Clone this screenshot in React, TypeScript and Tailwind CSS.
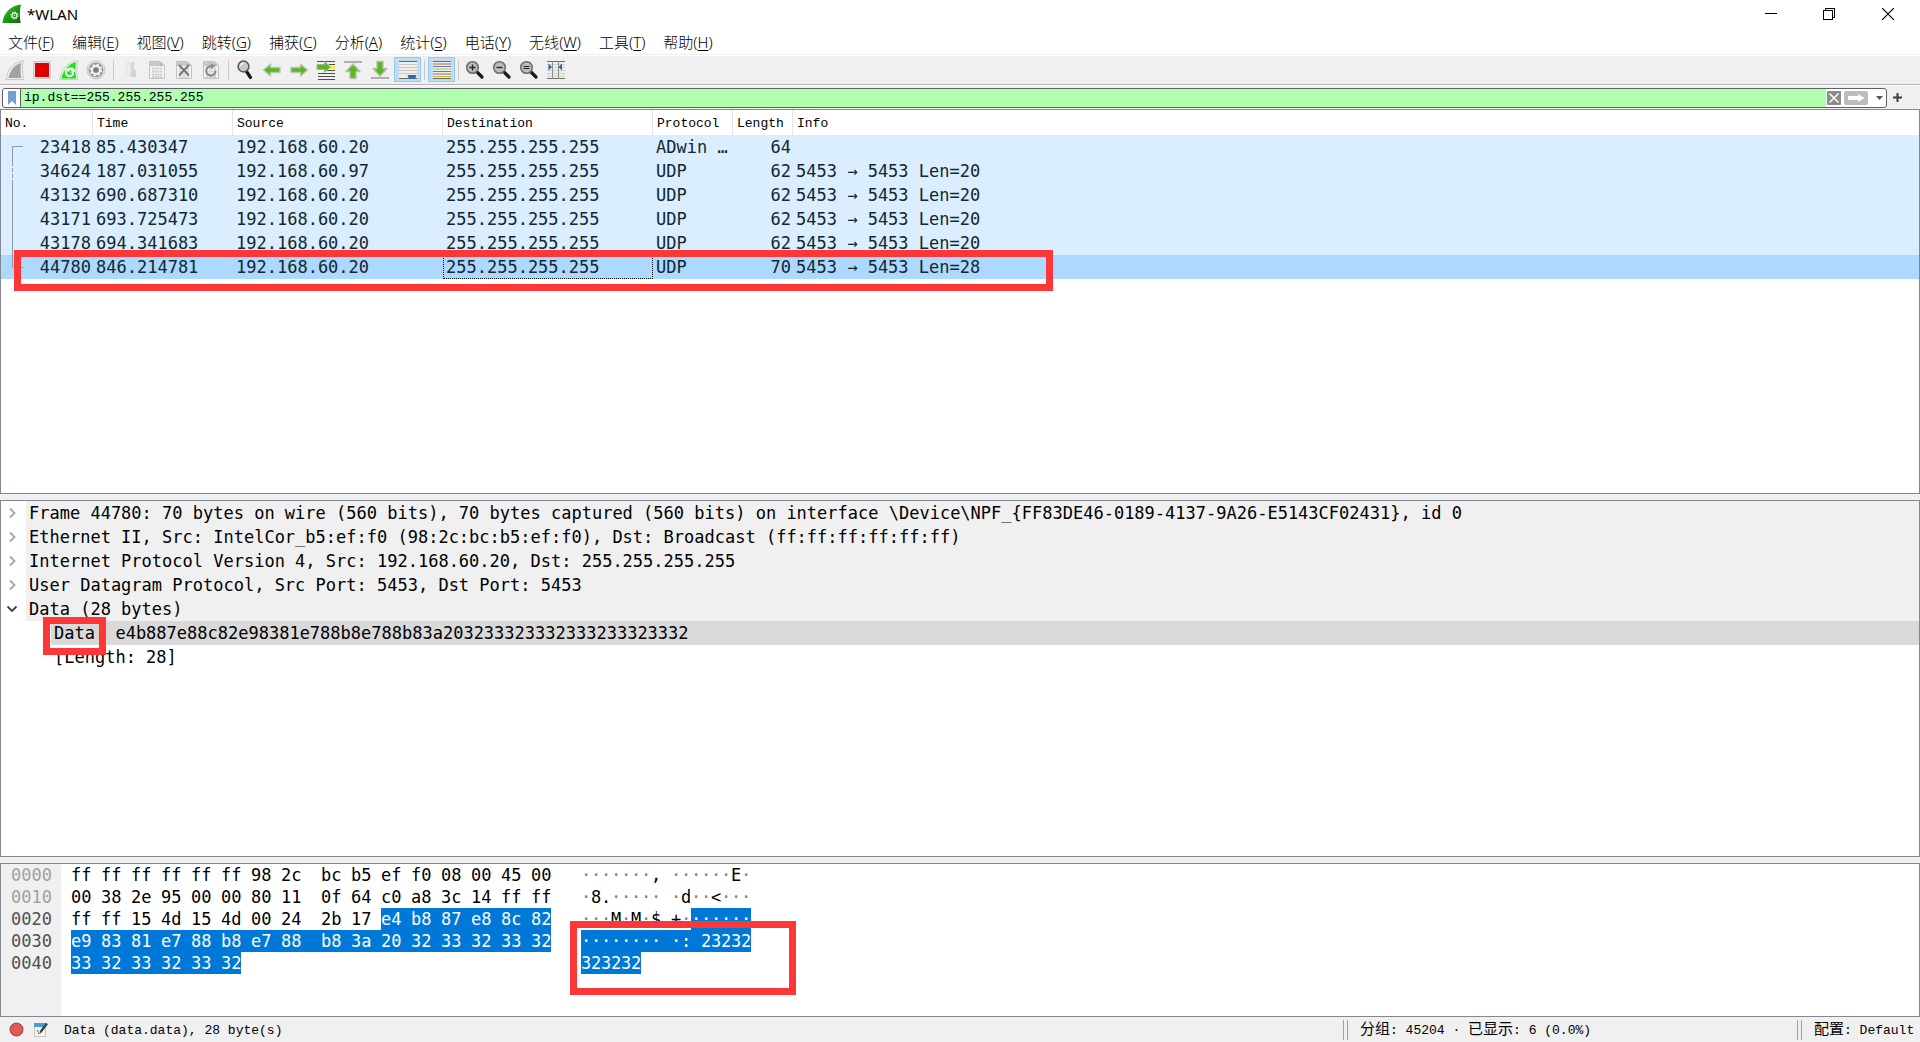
import React from "react";

const MONO = "font-['Liberation_Mono','Noto_Sans_CJK_SC',monospace]";
const PACKET = "font-['DejaVu_Sans_Mono','Liberation_Mono',monospace]";

const menus: [string, string][] = [
  ["文件", "F"],
  ["编辑", "E"],
  ["视图", "V"],
  ["跳转", "G"],
  ["捕获", "C"],
  ["分析", "A"],
  ["统计", "S"],
  ["电话", "Y"],
  ["无线", "W"],
  ["工具", "T"],
  ["帮助", "H"],
];

const packets = [
  ["23418", "85.430347", "192.168.60.20", "255.255.255.255", "ADwin …", "64", ""],
  ["34624", "187.031055", "192.168.60.97", "255.255.255.255", "UDP", "62", "5453 → 5453 Len=20"],
  ["43132", "690.687310", "192.168.60.20", "255.255.255.255", "UDP", "62", "5453 → 5453 Len=20"],
  ["43171", "693.725473", "192.168.60.20", "255.255.255.255", "UDP", "62", "5453 → 5453 Len=20"],
  ["43178", "694.341683", "192.168.60.20", "255.255.255.255", "UDP", "62", "5453 → 5453 Len=20"],
  ["44780", "846.214781", "192.168.60.20", "255.255.255.255", "UDP", "70", "5453 → 5453 Len=28"],
];

const details = [
  { open: false, text: "Frame 44780: 70 bytes on wire (560 bits), 70 bytes captured (560 bits) on interface \\Device\\NPF_{FF83DE46-0189-4137-9A26-E5143CF02431}, id 0" },
  { open: false, text: "Ethernet II, Src: IntelCor_b5:ef:f0 (98:2c:bc:b5:ef:f0), Dst: Broadcast (ff:ff:ff:ff:ff:ff)" },
  { open: false, text: "Internet Protocol Version 4, Src: 192.168.60.20, Dst: 255.255.255.255" },
  { open: false, text: "User Datagram Protocol, Src Port: 5453, Dst Port: 5453" },
  { open: true, text: "Data (28 bytes)" },
];

const SELECTED_FROM = 42;
const dump = [
  { offset: "0000", dim: true, hex: "ff ff ff ff ff ff 98 2c bc b5 ef f0 08 00 45 00", ascii: "·······,······E·" },
  { offset: "0010", dim: true, hex: "00 38 2e 95 00 00 80 11 0f 64 c0 a8 3c 14 ff ff", ascii: "·8.······d··<···" },
  { offset: "0020", dim: false, hex: "ff ff 15 4d 15 4d 00 24 2b 17 e4 b8 87 e8 8c 82", ascii: "···M·M·$+·······" },
  { offset: "0030", dim: false, hex: "e9 83 81 e7 88 b8 e7 88 b8 3a 20 32 33 32 33 32", ascii: "·········: 23232" },
  { offset: "0040", dim: false, hex: "33 32 33 32 33 32", ascii: "323232" },
];

function FinGrey() {
  return (
    <svg width="20" height="20" viewBox="0 0 20 20">
      <path d="M1 19.500C2 10 8 2 18.500.8c-1.800 5.500-1.600 12 .5 18.700z" fill="#efefef" stroke="#c9c9c9" />
      <path d="M3.500 18C5 10.500 9.500 4.600 16.200 2.700c-1 5-1 10 .3 15.300z" fill="#a2a2a2" />
    </svg>
  );
}

function Stop() {
  return (
    <svg width="20" height="20" viewBox="0 0 20 20">
      <rect x="1.500" y="1.500" width="17" height="17" fill="#e2e2e2" stroke="#c8c8c8" />
      <rect x="3" y="3" width="14" height="14" fill="#dd0000" />
    </svg>
  );
}

function FinGreen() {
  return (
    <svg width="20" height="20" viewBox="0 0 20 20">
      <path d="M1 19.500C2 10 8 2 19 .8c-1.800 5.500-1.600 12 0 18.700z" fill="#eaf6e7" stroke="#c3cfc0" />
      <path d="M2.500 18.500C4 10.500 9.500 3.600 17 2.200c-1 5-1 11 .3 16.300z" fill="#23e01c" />
      <path d="M7.500 10.500a3.600 3.600 0 0 0 2 5.500 3.800 3.800 0 0 0 4.800-3" fill="none" stroke="#fff" strokeWidth="1.900" />
      <path d="M5.500 9.500 10 7.500l.5 4.500z M10.500 7.500l3.500.2a4 4 0 0 1 2 4l-2 1.300-3-.5 1.800-.8a2 2 0 0 0-2.300-1.700z" fill="#fff" />
    </svg>
  );
}

function Gear() {
  return (
    <svg width="20" height="20" viewBox="0 0 20 20">
      <circle cx="10" cy="10" r="9" fill="#ececec" stroke="#c4c4c4" />
      <circle cx="10" cy="10" r="7.500" fill="#969696" />
      <circle cx="10" cy="10" r="4" fill="none" stroke="#f6f6f6" strokeWidth="2" />
      <circle cx="10" cy="10" r="5.600" fill="none" stroke="#f6f6f6" strokeWidth="1.400" strokeDasharray="2.200 2.200" />
      <circle cx="10" cy="10" r="2.400" fill="#808080" />
    </svg>
  );
}

function OpenFile() {
  return (
    <svg width="20" height="20" viewBox="0 0 20 20">
      <path d="M5 2h9v8h2v7h-6l-4-2z" fill="#e3e3e3" />
      <path d="M12 2h2v8h2v7h-5z" fill="#d4d4d4" />
      <path d="M5 2l5 1.500V18l-5-2z" fill="#ebebeb" />
    </svg>
  );
}

function Sheet({ children }: { children?: React.ReactNode }) {
  return (
    <svg width="20" height="20" viewBox="0 0 20 20">
      <path d="M2.500 1.500h11l4 4v13h-15z" fill="#f3f3f3" stroke="#c2c2c2" />
      <path d="M3 2h10v4H3z" fill="#c9c9c9" />
      <path d="M13 2v4h4z" fill="#b2b2b2" />
      <path d="M5 8.500h10M5 11.500h10M5 14.500h10M5 17h10" stroke="#cfcfcf" strokeWidth="1.800" strokeDasharray="2 .7" />
      {children}
    </svg>
  );
}

function Glass({ mark }: { mark: string }) {
  return (
    <svg width="20" height="20" viewBox="0 0 20 20">
      <path d="M11.500 11.500l5.500 5.500" stroke="#1a1a1a" strokeWidth="3.200" strokeLinecap="round" />
      <circle cx="7.500" cy="7.500" r="5.800" fill="#bdbdbd" stroke="#6a6a6a" strokeWidth="1.500" />
      {mark === "+" && <path d="M4.500 7.500h6M7.500 4.500v6" stroke="#222" strokeWidth="1.300" />}
      {mark === "-" && <path d="M4.500 7.500h6" stroke="#222" strokeWidth="1.300" />}
      {mark === "=" && <path d="M4.500 6.500h6M4.500 8.500h6" stroke="#222" strokeWidth="1.200" />}
    </svg>
  );
}

function Find() {
  return (
    <svg width="20" height="20" viewBox="0 0 20 20">
      <path d="M11.500 11.500l4 6" stroke="#1a1a1a" strokeWidth="3.200" strokeLinecap="round" />
      <circle cx="8.500" cy="6.500" r="5.400" fill="#c8c8c8" stroke="#555" strokeWidth="1.500" />
      <path d="M5.500 6a3 3 0 0 1 3-2.500" fill="none" stroke="#fff" strokeWidth="1.200" />
    </svg>
  );
}

function Back() {
  return (
    <svg width="20" height="20" viewBox="0 0 20 20">
      <path d="M1.500 10 8.500 4v3.500H18v5H8.500V16z" fill="#58b81c" stroke="#b9c4b2" strokeWidth="1.400" strokeLinejoin="round" />
    </svg>
  );
}

function Forward() {
  return (
    <svg width="20" height="20" viewBox="0 0 20 20">
      <path d="M18.500 10 11.500 4v3.500H2v5h9.500V16z" fill="#58b81c" stroke="#b9c4b2" strokeWidth="1.400" strokeLinejoin="round" />
    </svg>
  );
}

function GoTo() {
  return (
    <svg width="20" height="20" viewBox="0 0 20 20">
      <path d="M1 1.500h18M2 13.500h17M2 16.500h17M2 19.500h17M13 4.500h6M11 10.500h8" stroke="#4a4f50" strokeWidth="1" />
      <path d="M14 7.500h5" stroke="#fce94f" strokeWidth="3" />
      <path d="M14.500 7 8.500 1.500v3H1v5h7.500v3z" fill="#58b81c" stroke="#a5b59a" strokeLinejoin="round" />
    </svg>
  );
}

function Top() {
  return (
    <svg width="20" height="20" viewBox="0 0 20 20">
      <path d="M1 2h18" stroke="#b0b0b0" strokeWidth="2" />
      <path d="M10 4 3 11.500h4v7h6v-7h4z" fill="#58b81c" stroke="#b4c0ac" strokeWidth="1.400" strokeLinejoin="round" />
    </svg>
  );
}

function Bottom() {
  return (
    <svg width="20" height="20" viewBox="0 0 20 20">
      <path d="M1 18h18" stroke="#b0b0b0" strokeWidth="2" />
      <path d="M10 16 3 8.500h4v-7h6v7h4z" fill="#58b81c" stroke="#b4c0ac" strokeWidth="1.400" strokeLinejoin="round" />
    </svg>
  );
}

function AutoScroll() {
  return (
    <svg width="20" height="20" viewBox="0 0 20 20">
      <path d="M1 1h18v18H1z" fill="#eeeeec" />
      <path d="M1 1.500h18M1 18.500h18" stroke="#666864" />
      <path d="M1 4.500h18M1 7.500h18M1 10.500h18M1 13.500h18" stroke="#c8c9c5" />
      <path d="M9.500 15h9l-1.500 4h-6z" fill="#3465a4" />
    </svg>
  );
}

function Colorize() {
  return (
    <svg width="20" height="20" viewBox="0 0 20 20">
      <path d="M1 1h18v18H1z" fill="#eeeeec" />
      <path d="M1 1.500h18M1 18.500h18" stroke="#666864" />
      <path d="M1 4h18" stroke="#f04848" />
      <path d="M1 6.500h18" stroke="#5580b8" />
      <path d="M1 9h18" stroke="#86d838" />
      <path d="M1 11.500h18" stroke="#5580b8" />
      <path d="M1 14h18" stroke="#8d6c93" />
      <path d="M1 16.500h18" stroke="#d0b020" />
    </svg>
  );
}

function ResizeColumns() {
  return (
    <svg width="20" height="20" viewBox="0 0 20 20">
      <path d="M1 1h18v18H1z" fill="#eeeeec" />
      <path d="M1 4.500h18M1 7.500h18M1 10.500h18M1 13.500h18M1 16h18" stroke="#cfd0cc" />
      <path d="M1 1.500h18M1 18.500h18" stroke="#666864" />
      <path d="M6.500 1v18M12.500 1v18" stroke="#8d8f8b" />
      <path d="M2.500 3.500 6 7l-3.500 3.500zM16 3.500 12.500 7l3.500 3.500z" fill="#2d62b0" />
    </svg>
  );
}

type Tool = { label: string; icon: React.ReactNode; on?: boolean } | null;

const tools: Tool[] = [
  { label: "开始捕获", icon: <FinGrey /> },
  { label: "停止捕获", icon: <Stop /> },
  { label: "重新开始捕获", icon: <FinGreen /> },
  { label: "捕获选项", icon: <Gear /> },
  null,
  { label: "打开", icon: <OpenFile /> },
  { label: "保存", icon: <Sheet /> },
  {
    label: "关闭",
    icon: (
      <Sheet>
        <path d="M5 5l10 10.500M15 5L5 15.500" stroke="#777" strokeWidth="1.900" />
      </Sheet>
    ),
  },
  {
    label: "重新加载",
    icon: (
      <Sheet>
        <path d="M14.500 10.500a4.700 4.700 0 1 1-3-4" fill="none" stroke="#8a8a8a" strokeWidth="2" />
        <path d="M9.500 3.500l5 2.500-4.500 3z" fill="#8a8a8a" />
      </Sheet>
    ),
  },
  null,
  { label: "查找", icon: <Find /> },
  { label: "后退", icon: <Back /> },
  { label: "前进", icon: <Forward /> },
  { label: "转到分组", icon: <GoTo /> },
  { label: "首个分组", icon: <Top /> },
  { label: "最新分组", icon: <Bottom /> },
  { label: "自动滚动", icon: <AutoScroll />, on: true },
  null,
  { label: "着色", icon: <Colorize />, on: true },
  null,
  { label: "放大", icon: <Glass mark="+" /> },
  { label: "缩小", icon: <Glass mark="-" /> },
  { label: "正常大小", icon: <Glass mark="=" /> },
  { label: "调整列宽", icon: <ResizeColumns /> },
];

function TitleBar() {
  return (
    <header className="flex h-7 shrink-0 items-center bg-white pl-0.5">
      <svg width="20" height="20" viewBox="0 0 20 20">
        <defs>
          <linearGradient id="fin" x1="0" y1="0" x2="1" y2="1">
            <stop offset="0" stopColor="#5fc34a" />
            <stop offset=".5" stopColor="#1f9a12" />
            <stop offset="1" stopColor="#0c6a08" />
          </linearGradient>
        </defs>
        <path d="M.5 19C1 10 8 1.500 19 .5c-1.500 6-1.500 12-.3 18.500z" fill="url(#fin)" />
        <circle cx="12.500" cy="11.500" r="2.500" fill="none" stroke="#dff3da" strokeWidth="1.300" />
        <circle cx="12.500" cy="11.500" r="3.600" fill="none" stroke="#dff3da" strokeDasharray="1.300 1.500" />
        <circle cx="12.500" cy="11.500" r=".8" fill="#dff3da" />
      </svg>
      <h1 className="ml-[5px] flex-1 text-[15px] leading-5">*WLAN</h1>
      <div className="flex self-stretch pr-0.5">
        <button aria-label="最小化" className="flex w-[58px] items-center justify-center">
          <svg width="12" height="12" viewBox="0 0 12 12"><path d="M0 5.500h12" stroke="#000" /></svg>
        </button>
        <button aria-label="还原" className="flex w-[58px] items-center justify-center">
          <svg width="12" height="12" viewBox="0 0 12 12" shapeRendering="crispEdges">
            <path d="M.5 2.500h9v9h-9zM2.500 2.500v-2h9v9h-2" fill="none" stroke="#000" />
          </svg>
        </button>
        <button aria-label="关闭窗口" className="flex w-[60px] items-center justify-center">
          <svg width="12" height="12" viewBox="0 0 12 12"><path d="M0 0l12 12M12 0L0 12" stroke="#000" strokeWidth="1.200" /></svg>
        </button>
      </div>
    </header>
  );
}

function MenuBar() {
  return (
    <nav className="flex h-[27px] shrink-0 items-center gap-[18px] border-b border-[#f0f0f0] bg-white pb-px pl-2 pt-0.5 text-[15px] font-light leading-5">
      {menus.map(([name, key]) => (
        <button key={key} className="whitespace-nowrap">
          {name}(<u className="underline-offset-2">{key}</u>)
        </button>
      ))}
    </nav>
  );
}

function ToolBar() {
  return (
    <div role="toolbar" className="mt-px flex h-[29px] shrink-0 items-start border-b border-[#b4b4b4] bg-[#f0f0f0] pl-0.5 pt-px">
      {tools.map((t, i) =>
        t === null ? (
          <div key={i} className="flex w-[7px] justify-center pt-[3px]">
            <div className="h-5 w-px bg-[#c8c8c8]" />
          </div>
        ) : (
          <button
            key={i}
            aria-label={t.label}
            aria-pressed={t.on}
            className={
              t.on
                ? "flex h-[25px] w-[27px] items-start border border-[#90c8f6] bg-[#c0dcf3] pl-[3px] pt-0.5"
                : "flex h-[25px] w-[27px] items-start pl-[3px] pt-[3px]"
            }
          >
            {t.icon}
          </button>
        )
      )}
    </div>
  );
}

function FilterBar() {
  return (
    <div className="flex h-6 shrink-0 items-center border-t border-white bg-[#f0f0f0] pl-0.5">
      <div className="flex h-5 flex-1 items-stretch overflow-hidden rounded-[3px] border border-[#5f6165] bg-white">
        <button aria-label="书签" className="flex w-[18px] items-center justify-center border-r border-[#5f6165]">
          <svg width="8" height="14" viewBox="0 0 8 14"><path d="M0 0h8v14L4 10l-4 4z" fill="#729fcf" /></svg>
        </button>
        <input
          aria-label="显示过滤器"
          defaultValue="ip.dst==255.255.255.255"
          className={`${MONO} min-w-0 flex-1 bg-[#afffaf] pl-[3px] text-[13px] text-black outline-none`}
        />
        <div className="flex items-center gap-[3px] pl-px">
          <button aria-label="清除">
            <svg width="14" height="14" viewBox="0 0 14 14">
              <rect width="14" height="14" rx="1" fill="#8b8d88" />
              <path d="M2.500 2.500l9 9M11.500 2.500l-9 9" stroke="#fff" strokeWidth="1.500" />
            </svg>
          </button>
          <button aria-label="应用">
            <svg width="24" height="14" viewBox="0 0 24 14">
              <rect width="24" height="14" rx="2" fill="#babdb9" />
              <path d="M4 5h10V3l6.500 4-6.500 4V9H4z" fill="#fff" />
            </svg>
          </button>
          <button aria-label="历史" className="flex w-[15px] items-center justify-end pr-[3px]">
            <svg width="7" height="4" viewBox="0 0 7 4"><path d="M0 0h7L3.500 4z" fill="#555" /></svg>
          </button>
        </div>
      </div>
      <button aria-label="添加" className="flex w-[33px] pl-1.5">
        <svg width="9" height="9" viewBox="0 0 9 9"><path d="M0 4.500h9M4.500 0v9" stroke="#3c3c3c" strokeWidth="2" /></svg>
      </button>
    </div>
  );
}

function PacketList() {
  return (
    <section className="relative flex-[383] border border-[#828790] bg-white">
      <table className="w-full table-fixed border-separate border-spacing-0">
        <colgroup>
          <col className="w-[92px]" />
          <col className="w-[140px]" />
          <col className="w-[210px]" />
          <col className="w-[210px]" />
          <col className="w-[80px]" />
          <col className="w-[60px]" />
          <col />
        </colgroup>
        <thead>
          <tr className={`${MONO} h-[25px] text-left text-[13px] leading-5`}>
            {["No.", "Time", "Source", "Destination", "Protocol", "Length", "Info"].map((h) => (
              <th key={h} className="border-r border-[#e5e5e5] pb-0 pl-1 pt-0.5 font-normal last:border-r-0">
                {h}
              </th>
            ))}
          </tr>
        </thead>
        <tbody className={`${PACKET} text-[17px] leading-6 text-[#12272e]`}>
          {packets.map((p, r) => (
            <tr key={p[0]} className={r === 5 ? "h-6 bg-[#add8ff]" : "h-6 bg-[#daeeff]"}>
              {p.map((c, i) => (
                <td
                  key={i}
                  className={
                    i === 0 || i === 5
                      ? "whitespace-nowrap pr-0.5 text-right"
                      : r === 5 && i === 3
                        ? "whitespace-nowrap pl-[3px] outline-1 -outline-offset-1 outline-dotted outline-black"
                        : "whitespace-nowrap pl-[3px]"
                  }
                >
                  {c}
                </td>
              ))}
            </tr>
          ))}
        </tbody>
      </table>
      <svg className="absolute left-[11px] top-9" width="11" height="132" viewBox="0 0 11 132" fill="none" stroke="#8a9aa6">
        <path d="M11 .5H.5V16M.5 38v83.500H11" />
        <path d="M.5 16v22" strokeDasharray="4 2" />
      </svg>
      <div className="absolute left-[13px] top-[140px] h-[41px] w-[1039px] border-[7px] border-[#fc3737]" />
    </section>
  );
}

function Details() {
  return (
    <section className={`${PACKET} relative flex-[355] border border-[#828790] bg-white text-[17px] leading-6 text-black`}>
      {details.map((d) => (
        <div key={d.text} className="flex h-6">
          <button aria-label={d.open ? "折叠" : "展开"} className="flex w-[25px] items-center pl-[5px]">
            <svg width="12" height="12" viewBox="0 0 12 12" fill="none" strokeWidth="1.800">
              {d.open ? <path d="M1.500 3.500 6 8l4.500-4.500" stroke="#404040" /> : <path d="M4 1.500 8.500 6 4 10.500" stroke="#a6a6a6" />}
            </svg>
          </button>
          <div className="flex-1 whitespace-pre bg-[#f0f0f0] pl-[3px]">{d.text}</div>
        </div>
      ))}
      <div className="ml-[50px] h-6 bg-[#d9d9d9] pl-[3px]">Data: e4b887e88c82e98381e788b8e788b83a203233323332333233323332</div>
      <div className="ml-[50px] h-6 pl-[3px]">[Length: 28]</div>
      <div className="absolute left-[42px] top-[116px] h-[38px] w-[63px] border-[7px] border-[#fc3737]" />
    </section>
  );
}

function Bytes() {
  return (
    <section className={`${PACKET} relative flex flex-[152] border border-[#828790] bg-white text-[17px] leading-[22px] text-black`}>
      <div className="w-[60px] bg-[#f0f0f0] pl-2.5">
        {dump.map((d) => (
          <div key={d.offset} className={d.dim ? "h-[22px] text-[#a0a0a0]" : "h-[22px] text-[#505050]"}>
            {d.offset}
          </div>
        ))}
      </div>
      <div className="ml-2.5 w-[510px]">
        {dump.map((d, r) => (
          <div key={d.offset} className="flex h-[22px]">
            {d.hex.split(" ").map((b, i, all) => {
              const sel = r * 16 + i >= SELECTED_FROM;
              const width = i === all.length - 1 ? "w-5" : i === 7 ? "w-10" : "w-[30px]";
              return (
                <span key={i} className={sel ? `${width} bg-[#0078d7] text-white` : width}>
                  {b}
                </span>
              );
            })}
          </div>
        ))}
      </div>
      <div>
        {dump.map((d, r) => (
          <div key={d.offset} className="flex h-[22px]">
            {d.ascii.split("").map((c, i) => {
              const sel = r * 16 + i >= SELECTED_FROM;
              const width = i === 7 ? "w-5" : "w-2.5";
              const tone = sel ? "bg-[#0078d7] text-white" : c === "·" ? "text-[#808080]" : "";
              return (
                <span key={i} className={`${width} ${tone} whitespace-pre`}>
                  {c}
                </span>
              );
            })}
          </div>
        ))}
      </div>
      <div className="absolute left-[569px] top-[57px] h-[74px] w-[226px] border-[7px] border-[#fc3737]" />
    </section>
  );
}

function Grip() {
  return <div className="h-5 w-[5px] border-x border-[#a0a0a0]" />;
}

function StatusBar() {
  return (
    <footer className={`${MONO} flex h-[25px] shrink-0 items-center whitespace-pre bg-[#f0f0f0] text-[13px] leading-5`}>
      <button aria-label="专家信息" className="ml-[9px]">
        <svg width="15" height="15" viewBox="0 0 15 15">
          <circle cx="7.500" cy="7.500" r="6.500" fill="#e05a5a" stroke="#a83a3a" />
        </svg>
      </button>
      <button aria-label="捕获文件注释" className="ml-2.5">
        <svg width="15" height="16" viewBox="0 0 15 16">
          <rect x=".5" y="1.500" width="11" height="13" fill="#f6f6f4" stroke="#c5c5c0" />
          <rect x="0" y="1" width="12" height="4" fill="#4a9ad8" />
          <path d="M3 8l2.500 4 2-3" fill="none" stroke="#555" />
          <path d="M13 1.500 6.500 10" stroke="#3c4244" strokeWidth="2.400" />
        </svg>
      </button>
      <span className="ml-[15px] flex-1 pt-0.5">Data (data.data), 28 byte(s)</span>
      <Grip />
      <span className="ml-3 w-[437px] pt-0.5">
        <span className="text-[15px]">分组</span>: 45204 · <span className="text-[15px]">已显示</span>: 6 (0.0%)
      </span>
      <Grip />
      <button className="ml-3 w-[106px] pt-0.5 text-left">
        <span className="text-[15px]">配置</span>: Default
      </button>
    </footer>
  );
}

export default function App() {
  return (
    <div className="flex h-screen flex-col overflow-hidden bg-white font-['Noto_Sans','Noto_Sans_CJK_SC',sans-serif] text-black">
      <TitleBar />
      <MenuBar />
      <ToolBar />
      <FilterBar />
      <main className="flex min-h-0 flex-1 flex-col gap-1.5 bg-[#f0f0f0]">
        <PacketList />
        <Details />
        <Bytes />
      </main>
      <StatusBar />
    </div>
  );
}
